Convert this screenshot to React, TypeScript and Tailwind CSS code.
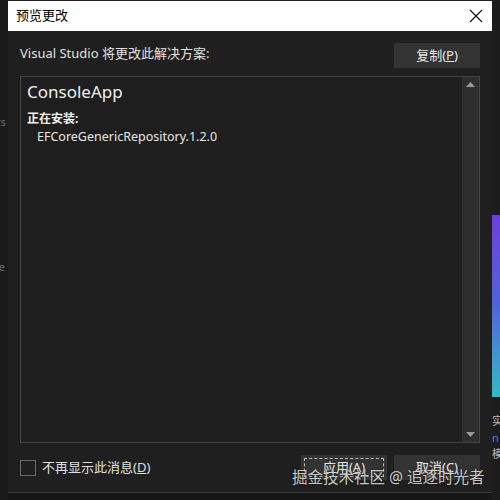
import React from "react";

const font = { fontFamily: '"Noto Sans", "Noto Sans CJK SC", sans-serif' };

function Btn({ label, focused }: { label: React.ReactNode; focused?: boolean }) {
  return (
    <button className="relative flex h-[25px] w-[86px] items-center justify-center bg-[#333333] text-[13px] text-[#e8e8e8]">
      {focused && <span className="absolute inset-[3px] border border-dashed border-[#bdbdbd]" />}
      <span className="relative">{label}</span>
    </button>
  );
}

export default function App() {
  return (
    <div className="relative flex h-[500px] w-[500px] overflow-hidden bg-[#161616] text-[#e6e6e6]" style={font}>
      {/* left side of the app behind */}
      <div className="flex w-[8px] shrink-0 flex-col overflow-hidden bg-[#1a1a1a] pt-[114px] text-[11px] text-[#6b6b6b]">
        <span className="-ml-[4px]">rs</span>
        <span className="-ml-[4px] mt-[128px]">ie</span>
      </div>

      {/* dialog */}
      <div className="flex h-[493px] w-[484px] shrink-0 flex-col border-b border-[#3a3a3a] bg-[#1f1f1f] pt-[1px]">
        <div className="flex h-[30px] items-center justify-between bg-white pl-[8px] pr-[8px] text-[13px] text-black">
          <span>预览更改</span>
          <svg width="14" height="14" viewBox="0 0 14 14" className="mr-[1px]">
            <path d="M1 1 L13 13 M13 1 L1 13" stroke="#111" strokeWidth="1.2" fill="none" />
          </svg>
        </div>

        <div className="flex flex-1 flex-col px-[12px] pb-[10px]">
          <div className="mt-[12px] flex items-center justify-between">
            <span className="-mt-[3px] text-[13px] text-[#e0e0e0]">Visual Studio 将更改此解决方案:</span>
            <Btn label={<>复制(<u>P</u>)</>} />
          </div>

          <div className="mt-[8px] flex h-[367px] border border-[#444444] bg-[#1e1e1e]">
            <div className="flex-1 pl-[6px] pt-[3px]">
              <div className="text-[17px] leading-[24px] text-[#f0f0f0]">ConsoleApp</div>
              <div className="mt-[7px] text-[12px] font-bold leading-[16px] text-[#f0f0f0]">正在安装:</div>
              <div className="mt-[1px] pl-[10px] text-[12.5px] leading-[18px] text-[#e6e6e6]">EFCoreGenericRepository.1.2.0</div>
            </div>
            <div className="flex w-[17px] flex-col items-center justify-between bg-[#2e2e2e] py-[5px]">
              <svg width="9" height="5" viewBox="0 0 9 5">
                <path d="M0 5 L4.5 0 L9 5 Z" fill="#9a9a9a" />
              </svg>
              <svg width="9" height="5" viewBox="0 0 9 5">
                <path d="M0 0 L4.5 5 L9 0 Z" fill="#9a9a9a" />
              </svg>
            </div>
          </div>

          <div className="mt-[12px] flex items-center justify-between">
            <label className="flex items-center gap-[6px] text-[13px] text-[#e0e0e0]">
              <span className="h-[16px] w-[16px] border border-[#6a6a6a]" />
              <span>不再显示此消息(<u>D</u>)</span>
            </label>
            <div className="flex gap-[7px]">
              <Btn label={<>应用(<u>A</u>)</>} focused />
              <Btn label={<>取消(<u>C</u>)</>} />
            </div>
          </div>
        </div>
      </div>

      {/* right side of the app behind */}
      <div className="flex w-[8px] shrink-0 flex-col overflow-hidden bg-[#1c1c1c] pt-[215px]">
        <div className="h-[182px] w-[8px] bg-gradient-to-b from-[#6b3fdc] via-[#4f63d8] to-[#2fb8c4]" />
        <span className="mt-[16px] text-[11px] text-[#bbbbbb]">实</span>
        <span className="text-[11px] text-[#3b82f6]">n</span>
        <span className="text-[11px] text-[#bbbbbb]">模</span>
      </div>

      {/* watermark */}
      <div className="pointer-events-none absolute left-[292px] top-[466px] text-[15.5px] leading-[22px] text-[#e8e8e8]/85 [text-shadow:0_0_2px_rgba(0,0,0,0.6)]">
        掘金技术社区 @ 追逐时光者
      </div>
    </div>
  );
}
